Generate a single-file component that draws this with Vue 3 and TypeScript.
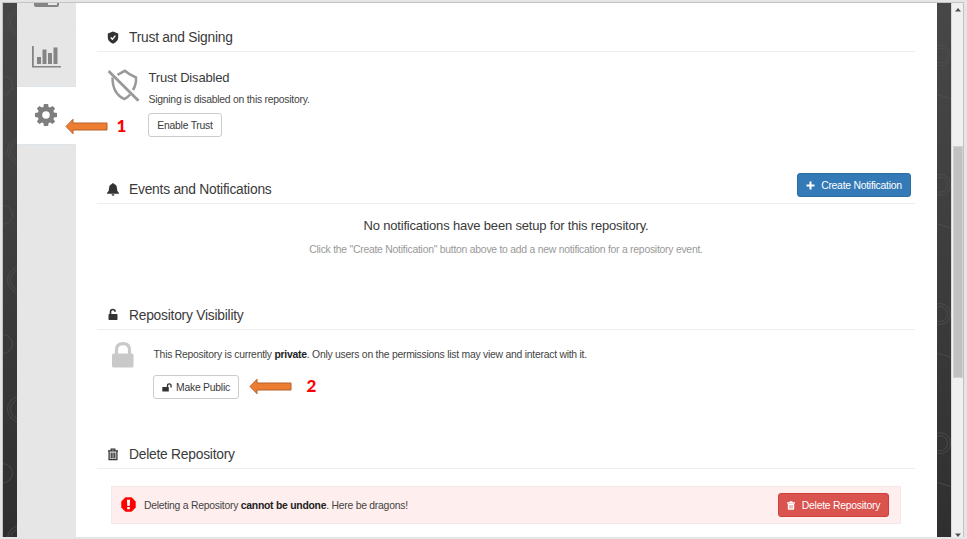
<script setup lang="ts">
const rings: number[] = [0, 1, 2, 3, 4]
const period = 129.25
</script>

<template>
  <div class="window">
    <div class="page">
      <svg class="strip" width="14" height="535" viewBox="3 2.5 14 535">
        <g v-for="n in rings" :key="n" class="deco">
          <circle cx="20.5" :cy="21 + n * period" r="13" />
          <circle cx="20.5" :cy="21 + n * period" r="10" />
          <circle cx="3" :cy="85 + n * period" r="9.5" />
        </g>
      </svg>

      <nav class="tabs">
        <div class="tab tab-first">
          <svg width="28" height="8" viewBox="0 0 28 8"><path d="M1 0h25v5q0 2-2 2H3q-2 0-2-2z" fill="#858585" /><path d="M15 3h9v2h-9z" fill="#e9e9e9" /></svg>
        </div>
        <div class="tab tab-chart">
          <svg width="29" height="22" viewBox="0 0 29 22" fill="#858585">
            <path d="M0 0h1.800v20H29v1.600H0zM5 11h4v7H5zM10.500 3.500h4V18h-4zM16 7h4v11h-4zM21.500 1.500h4V18h-4z" />
          </svg>
        </div>
        <div class="tab tab-active">
          <svg width="22" height="22" viewBox="0 0 22 22">
            <path fill="#7e7e7e" fill-rule="evenodd" d="M8.900 0h4.200l.5 3 1.500.6L17.600 1.900 20.100 4.400l-1.700 2.500.6 1.500 3 .5v4.200l-3 .5-.6 1.500 1.700 2.500-2.500 2.500-2.500-1.700-1.500.6-.5 3H8.900l-.5-3-1.500-.6-2.500 1.700-2.500-2.500 1.700-2.500-.6-1.500-3-.5V8.900l3-.5.6-1.500L1.900 4.400 4.400 1.900l2.500 1.700L8.400 3zM11 7.200a3.800 3.800 0 1 0 0 7.600a3.800 3.800 0 0 0 0-7.600z" />
          </svg>
        </div>
      </nav>

      <main class="content">
        <section class="panel trust">
          <h2>
            <svg class="hicon" width="12" height="13" viewBox="0 0 12 13"><path d="M6 .5l5.200 2v4q0 4-5.200 6.200Q.8 10.500.8 6.500v-4z" fill="#333" /><path d="M3.700 6.500l1.700 1.700 3-3.500" fill="none" stroke="#fff" stroke-width="1.300" /></svg>
            <span>Trust and Signing</span>
          </h2>
          <div class="trust-body">
            <svg class="trust-icon" width="32" height="34" viewBox="0 0 32 34" fill="none" stroke="#999" stroke-width="2.500">
              <path d="M.5 3L30.500 32.800" stroke-width="2.800" />
              <path d="M9.500 6.800L16.800 2.800Q21 6.600 28 9.500Q28.500 16 25 22" />
              <path d="M4.500 9.500Q4.500 26 16.500 31Q19.500 29.800 22 26.500" />
            </svg>
            <div>
              <h3>Trust Disabled</h3>
              <p>Signing is disabled on this repository.</p>
              <button class="btn">Enable Trust</button>
            </div>
          </div>
        </section>

        <section class="panel events">
          <h2>
            <svg class="hicon" width="12" height="13" viewBox="0 0 12 13" fill="#333"><path d="M6 0q.8 0 .9 1Q9.900 1.800 9.900 5q0 3.800 2.100 5v.8H0V10q2.100-1.200 2.100-5Q2.100 1.800 5.100 1 5.200 0 6 0zM4.500 11.200h3q-.3 1.500-1.500 1.500t-1.500-1.500z" /></svg>
            <span>Events and Notifications</span>
            <button class="btn primary">
              <svg width="9" height="9" viewBox="0 0 9 9"><path d="M4.500.5v8M.5 4.500h8" stroke="#fff" stroke-width="2" /></svg>
              Create Notification
            </button>
          </h2>
          <div class="empty">
            <h3>No notifications have been setup for this repository.</h3>
            <p>Click the "Create Notification" button above to add a new notification for a repository event.</p>
          </div>
        </section>

        <section class="panel visibility">
          <h2>
            <svg class="hicon lifted" width="12" height="13" viewBox="0 0 12 13"><path d="M3.500 6V3.800q0-2.300 2.300-2.300t2.300 2.300" fill="none" stroke="#333" stroke-width="1.600" /><rect x="1.500" y="6" width="9" height="6" rx=".7" fill="#333" /></svg>
            <span>Repository Visibility</span>
          </h2>
          <div class="visibility-body">
            <svg class="lock" width="22" height="26" viewBox="0 0 22 26"><path d="M4.500 12V7.800Q4.500 1.700 11 1.700T17.500 7.800V12" fill="none" stroke="#c9c9c9" stroke-width="3.200" /><rect y="11.500" width="21.500" height="14" rx="1.500" fill="#c9c9c9" /></svg>
            <div>
              <p>This Repository is currently <b>private</b>. Only users on the permissions list may view and interact with it.</p>
              <button class="btn public">
                <svg width="10" height="9" viewBox="0 0 10 9"><path d="M5.500 4V2.700Q5.500.8 7.300.8T9.100 2.700V4.400" fill="none" stroke="#333" stroke-width="1.300" /><rect x=".3" y="3.900" width="6.500" height="4.700" rx=".5" fill="#333" /></svg>
                Make Public
              </button>
            </div>
          </div>
        </section>

        <section class="panel">
          <h2>
            <svg class="hicon" width="12" height="13" viewBox="0 0 12 13"><path d="M1 2.900h10M4.200 2.500V1.200h3.600v1.300M2.100 3v8.600h7.800V3M4.200 4.500v6M6 4.500v6M7.800 4.500v6" fill="none" stroke="#333" stroke-width="1.300" /></svg>
            <span>Delete Repository</span>
          </h2>
          <div class="danger">
            <svg width="15" height="15" viewBox="0 0 15 15"><path d="M4.500.3h6l4.200 4.200v6l-4.200 4.200h-6L.3 10.500v-6z" fill="#f00" /><path d="M5.900 2.700h3.200l-.4 6.300H6.300zM6.200 10h2.600v2.300H6.200z" fill="#fff" /></svg>
            <p>Deleting a Repository <b>cannot be undone</b>. Here be dragons!</p>
            <button class="btn delete">
              <svg width="8" height="9" viewBox="0 0 8 9"><path d="M0 1.200h2.300L2.800.2h2.400l.5 1H8v1.200H0zM.8 2.800h6.400v5.200q0 .8-.8.8H1.600q-.8 0-.8-.8z" fill="#fff" /><path d="M2.800 4v3.700M4 4v3.700M5.200 4v3.700" stroke="#d9534f" stroke-width=".5" /></svg>
              Delete Repository
            </button>
          </div>
        </section>
      </main>

      <svg class="strip" width="14" height="535" viewBox="937 2.5 14 535">
        <g v-for="n in rings" :key="n" class="deco">
          <circle cx="940" :cy="55 + n * period" r="10.500" />
          <circle cx="940" :cy="55 + n * period" r="7.500" />
          <path :d="`M937 ${94 + n * period}l14 4.300`" />
        </g>
      </svg>

      <div class="scrollbar">
        <svg width="6" height="4" viewBox="0 0 6 4"><path d="M0 3.500L3 0l3 3.500z" fill="#505050" /></svg>
        <div class="thumb"></div>
        <svg class="down" width="6" height="4" viewBox="0 0 6 4"><path d="M0 .5h6L3 4z" fill="#505050" /></svg>
      </div>
    </div>

    <div class="note note-one">
      <svg width="43" height="17" viewBox="0 0 43 17"><path d="M1 8.500L8 1.300v3.700h34v7H8v3.700z" fill="#ed7d31" stroke="#b5622c" /></svg>
      <span>1</span>
    </div>
    <div class="note note-two">
      <svg width="43" height="17" viewBox="0 0 43 17"><path d="M1 8.500L8 1.300v3.700h34v7H8v3.700z" fill="#ed7d31" stroke="#b5622c" /></svg>
      <span>2</span>
    </div>
  </div>
</template>

<style>
body { margin: 0; background: #e5e5e5; }
</style>

<style scoped>
* { box-sizing: border-box; }
.window {
  position: relative;
  width: 967px;
  height: 539px;
  padding: 2px 3px 2px 2px;
  background: #e5e5e5;
  overflow: hidden;
  font-family: "Liberation Sans", Arial, sans-serif;
  font-size: 10.4px;
  letter-spacing: -0.25px;
  color: #444;
}
.page {
  display: flex;
  width: 962px;
  height: 535px;
  background: #fff;
  border-top: 1px solid #c3c3c3;
  border-left: 1px solid #c3c3c3;
  border-right: 1px solid #c3c3c3;
  overflow: hidden;
}
svg { display: block; flex: none; }
.strip { background: linear-gradient(#474747, #3e3e3e 45%, #2f2f2f); }
.deco { fill: none; stroke: #525252; stroke-opacity: .7; stroke-width: 1; }
.tabs { width: 59px; flex: none; background: #e6e6e6; }
.tab { display: flex; justify-content: center; border-bottom: 1px solid #dde5ea; }
.tab-first { height: 25px; border-color: #e1e6e9; }
.tab-first svg { margin-top: -3px; }
.tab-chart { height: 59px; padding-top: 18px; }
.tab-active { height: 58px; padding: 17px 1px 0 0; background: #fff; }
.content { width: 861px; flex: none; padding: 19px 22px 0 21px; }
.panel { height: 152px; }
.events { height: 126px; }
.visibility { height: 139px; }
h2, h3, p { margin: 0; font-weight: normal; }
h2 {
  display: flex;
  align-items: center;
  height: 30px;
  border-bottom: 1px solid #eee;
  color: #3a3a3a;
  font-size: 13.8px;
  letter-spacing: -0.23px;
  line-height: 16px;
}
h2 span { padding-top: 2px; }
.hicon { margin: 2px 10px 0 10px; }
.lifted { margin-top: 0; }
h3 { font-size: 13px; line-height: 16px; letter-spacing: -0.18px; color: #3a3a3a; }
p { line-height: 14px; white-space: nowrap; }
b { color: #222; }
.btn {
  display: flex;
  align-items: center;
  justify-content: center;
  height: 24px;
  padding: 1px 0 0;
  border: 1px solid #ccc;
  border-radius: 3px;
  background: #fff;
  color: #3a3a3a;
  font: 10.4px/15px "Liberation Sans", Arial, sans-serif;
  letter-spacing: -0.25px;
  white-space: nowrap;
}
.btn svg { margin-top: -1px; }
.trust-body { display: flex; padding: 18px 0 0 11px; }
.trust-icon { margin-right: 9px; margin-top: -2px; }
.trust-body h3 { margin-left: -0.5px; }
.trust-body p { margin: 7px 0 0 -0.5px; }
.trust-body .btn { width: 74px; margin: 6px 0 0 -1px; }
.primary {
  width: 114px;
  margin: -7px 4px 0 auto;
  gap: 6px;
  background: #337ab7;
  border-color: #2e6da4;
  color: #fff;
}
.empty { padding-top: 14px; text-align: center; }
.empty p { margin-top: 9px; color: #999; }
.visibility-body { display: flex; padding: 12px 0 0 15px; }
.lock { margin-right: 20px; }
.visibility-body p { margin: 6px 0 0 -0.5px; }
.public { width: 86px; margin: 13px 0 0 -1px; gap: 4px; }
.danger {
  display: flex;
  align-items: center;
  height: 38px;
  margin: 17px 14px 0;
  padding: 0 11px 0 9px;
  border: 1px solid #f4e8e8;
  background: #feeeee;
}
.danger p { margin-left: 8px; padding-top: 2px; }
.danger > svg { margin-top: -1px; }
.delete {
  width: 111px;
  margin-left: auto;
  gap: 7px;
  background: #d9534f;
  border-color: #d43f3a;
  color: #fff;
}
.scrollbar {
  display: flex;
  flex-direction: column;
  align-items: center;
  width: 12px;
  flex: none;
  padding-top: 5px;
  border-left: 1px solid #d8d8d8;
  background: #f0f0f0;
}
.thumb { width: 10px; height: 234px; margin-top: 134px; border: 1px solid #d2d2d2; background: #c1c1c1; }
.down { margin-top: 155px; }
.note {
  position: absolute;
  display: flex;
  align-items: center;
  color: #f00;
  font: 900 17px/20px Lato, sans-serif;
  letter-spacing: 0;
}
.note-one { left: 64.5px; top: 116px; gap: 9px; }
.note-two { left: 248.5px; top: 376px; gap: 15px; }
</style>
